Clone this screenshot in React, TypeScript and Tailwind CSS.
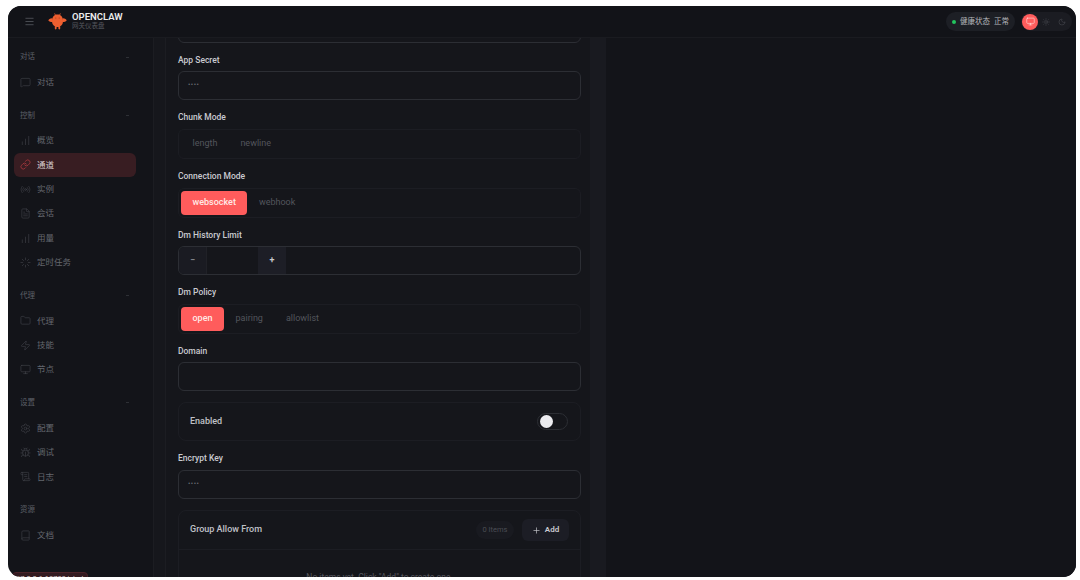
import React from "react";
import {
  Menu, MessageSquare, ChartNoAxesColumnIncreasing, Link, Radio, FileText, Loader, Folder, Zap, Monitor,
  Settings, Bug, ScrollText, Book, Sun, Moon, Plus,
} from "lucide-react";

const FONT = "font-['Roboto','Noto_Sans_CJK_SC',sans-serif]";

type Item = { label: string; icon: React.ElementType; active?: boolean };
type Section = { title: string; dash: boolean; items: Item[] };

const sections: Section[] = [
  { title: "对话", dash: true, items: [{ label: "对话", icon: MessageSquare }] },
  {
    title: "控制",
    dash: true,
    items: [
      { label: "概览", icon: ChartNoAxesColumnIncreasing },
      { label: "通道", icon: Link, active: true },
      { label: "实例", icon: Radio },
      { label: "会话", icon: FileText },
      { label: "用量", icon: ChartNoAxesColumnIncreasing },
      { label: "定时任务", icon: Loader },
    ],
  },
  {
    title: "代理",
    dash: true,
    items: [
      { label: "代理", icon: Folder },
      { label: "技能", icon: Zap },
      { label: "节点", icon: Monitor },
    ],
  },
  {
    title: "设置",
    dash: true,
    items: [
      { label: "配置", icon: Settings },
      { label: "调试", icon: Bug },
      { label: "日志", icon: ScrollText },
    ],
  },
  { title: "资源", dash: false, items: [{ label: "文档", icon: Book }] },
];

function Logo() {
  return (
    <svg width="19" height="17" viewBox="0 0 19 17" className="shrink-0">
      <path d="M9.5 1.4 C13 1.4 15 4 15 8 C15 11.6 12.8 14 9.5 14 C6.2 14 4 11.6 4 8 C4 4 6 1.4 9.5 1.4Z" fill="#ee5f30" />
      <path d="M4.4 5.2 C2.4 5 0.5 6.2 0.3 7.6 C1.6 9.2 3.6 9.2 4.6 8.4Z" fill="#ee5f30" />
      <path d="M14.6 5.2 C16.6 5 18.5 6.2 18.7 7.6 C17.4 9.2 15.4 9.2 14.4 8.4Z" fill="#ee5f30" />
      <rect x="6.8" y="13" width="1.8" height="3.4" rx="0.8" fill="#ee5f30" />
      <rect x="10.4" y="13" width="1.8" height="3.4" rx="0.8" fill="#ee5f30" />
      <path d="M7.4 2 L6.6 0.4 M11.6 2 L12.4 0.4" stroke="#ee5f30" strokeWidth="0.8" />
      <circle cx="7.8" cy="5" r="0.6" fill="#a83a1c" />
      <circle cx="11.2" cy="5" r="0.6" fill="#a83a1c" />
    </svg>
  );
}

function Sidebar() {
  return (
    <aside className="flex w-[145px] shrink-0 flex-col gap-[14px] pl-1.5 pr-[17px] pt-3">
      {sections.map((s) => (
        <div key={s.title} className="flex flex-col">
          <div className="mb-1.5 flex h-[14px] items-center justify-between pl-1.5 pr-[7px] text-[7.5px] text-[#5d6068]">
            <span>{s.title}</span>
            {s.dash && <span className="h-px w-[3px] bg-[#2e3035]" />}
          </div>
          {s.items.map((it) => {
            const Icon = it.icon;
            return (
              <div
                key={it.label}
                className={
                  it.active
                    ? "flex h-[24.4px] items-center gap-[6px] rounded-md bg-[#381d22] pl-[6px] text-[8.5px] text-[#d9cdcf]"
                    : "flex h-[24.4px] items-center gap-[6px] rounded-md pl-[6px] text-[8.5px] text-[#64676e]"
                }
              >
                <Icon size={11} strokeWidth={1.25} className={it.active ? "text-[#d8444c]" : "text-[#45474e]"} />
                <span>{it.label}</span>
              </div>
            );
          })}
        </div>
      ))}
    </aside>
  );
}

function Label({ children }: { children: React.ReactNode }) {
  return <div className="flex h-4 items-center text-[8.5px] font-medium text-[#c9cad0]">{children}</div>;
}

function TextField({ label, placeholder, gap }: { label: string; placeholder?: string; gap?: boolean }) {
  return (
    <div className={gap ? "mb-[9px] flex flex-col gap-1" : "mb-[9px] flex flex-col gap-[3px]"}>
      <Label>{label}</Label>
      <div className="flex h-[29px] items-center rounded-md border border-[#2c2e34] px-[9px] text-[7px] tracking-[0.5px] text-[#6a6c73]">
        {placeholder}
      </div>
    </div>
  );
}

function Segmented({ label, options, active }: { label: string; options: string[]; active?: string }) {
  return (
    <div className="mb-[9.5px] flex flex-col gap-1">
      <Label>{label}</Label>
      <div className="flex h-[29.5px] items-center rounded-md border border-[#1c1d23] px-[2px]">
        {options.map((o) => (
          <div
            key={o}
            className={
              o === active
                ? "flex h-6 items-center rounded bg-[#ff5c5c] px-[11.5px] text-[9px] font-medium text-[#ffe9e6]"
                : "flex h-6 items-center rounded px-[11.5px] text-[9px] text-[#53555c]"
            }
          >
            {o}
          </div>
        ))}
      </div>
    </div>
  );
}

function NumberField({ label }: { label: string }) {
  return (
    <div className="mb-[9px] flex flex-col gap-[3px]">
      <Label>{label}</Label>
      <div className="flex h-[29px] items-stretch overflow-hidden rounded-md border border-[#2c2e34]">
        <div className="flex w-[28px] items-center justify-center border-r border-[#202127] bg-[#1a1b22] text-[9px] font-semibold text-[#8b8d94]">−</div>
        <div className="w-[51px]" />
        <div className="flex w-[28px] items-center justify-center bg-[#1d1e26] text-[9px] font-semibold text-[#c9cad0]">+</div>
      </div>
    </div>
  );
}

function Form() {
  return (
    <div className="-mt-[24px] w-[403px]">
      <div className="mb-[9px] h-[29px] rounded-md border border-[#2c2e34]" />
      <TextField label="App Secret" placeholder="••••" />
      <Segmented label="Chunk Mode" options={["length", "newline"]} />
      <Segmented label="Connection Mode" options={["websocket", "webhook"]} active="websocket" />
      <NumberField label="Dm History Limit" />
      <Segmented label="Dm Policy" options={["open", "pairing", "allowlist"]} active="open" />
      <TextField label="Domain" />
      <div className="mb-[9px] mt-[11px] flex h-[39px] items-center justify-between rounded-lg border border-[#1c1d23] pl-[11px] pr-3 text-[9px] font-medium text-[#c0c1c7]">
        <span>Enabled</span>
        <div className="flex h-[17px] w-[31px] items-center rounded-full border border-[#2c2e34] bg-[#15161b] pl-[2px]">
          <div className="h-[13px] w-[13px] rounded-full bg-[#ececf0]" />
        </div>
      </div>
      <TextField label="Encrypt Key" placeholder="••••" gap />
      <div className="mt-[11px] rounded-lg border border-[#1c1d23]">
        <div className="flex h-[39px] items-center border-b border-[#1c1d23] pl-[11px] pr-[11px]">
          <span className="text-[9px] font-medium text-[#c0c1c7]">Group Allow From</span>
          <span className="ml-auto flex h-[18px] w-[38px] items-center justify-center rounded-full bg-[#191a20] text-[7.5px] text-[#4b4d54]">0 Items</span>
          <span className="ml-2 flex h-[22px] w-[47px] items-center justify-center gap-[4px] rounded-md bg-[#1c1d25] text-[8px] font-semibold text-[#c9cad0]">
            <Plus size={9} strokeWidth={1.75} />
            Add
          </span>
        </div>
        <div className="pt-[21px] text-center text-[8.5px] text-[#55575e]">No items yet. Click "Add" to create one.</div>
      </div>
    </div>
  );
}

export default function App() {
  return (
    <div className={`h-[580px] w-[1080px] overflow-hidden bg-white pb-[3px] pl-2 pr-1 pt-1.5 ${FONT}`}>
      <div className="relative flex h-full flex-col overflow-hidden rounded-[13px] bg-[#131419]">
        <header className="z-10 flex h-8 shrink-0 items-center border-b border-[#1a1b20] bg-[#121318] pl-[16px] pr-[4px]">
          <Menu size={11} strokeWidth={1.25} className="text-[#73757c]" />
          <div className="ml-[13px] flex items-center gap-[5px]">
            <Logo />
            <div className="-mt-px flex flex-col">
              <span className="text-[9.5px] font-semibold leading-[11px] text-[#eceded]">OPENCLAW</span>
              <span className="text-[6.5px] leading-[9px] text-[#54565d]">网关仪表盘</span>
            </div>
          </div>
          <div className="ml-auto flex h-[19px] w-[69px] items-center gap-1 rounded-full bg-[#1d1f25] pl-[6px] text-[7.5px] text-[#b4b5ba]">
            <span className="h-[4px] w-[4px] rounded-full bg-[#22c55e]" />
            <span>健康状态</span>
            <span>正常</span>
          </div>
          <div className="ml-[6px] flex h-[19px] w-[51px] items-center gap-1 rounded-full bg-[#1b1c22] pl-px">
            <span className="flex h-[16px] w-[16px] items-center justify-center rounded-full bg-[#ff5c5c]">
              <Monitor size={9} strokeWidth={1.5} className="text-[#ffe4e0]" />
            </span>
            <Sun size={8} strokeWidth={1.25} className="text-[#5b5d64]" />
            <Moon size={8} strokeWidth={1.25} className="ml-1 text-[#5b5d64]" />
          </div>
        </header>
        <div className="flex min-h-0 flex-1">
          <Sidebar />
          <div className="w-[13px] shrink-0 border-x border-[#1c1d22] bg-[#16171c]" />
          <main className="w-[424px] shrink-0 overflow-hidden bg-[#15161b] pl-3">
            <Form />
          </main>
          <div className="w-[16px] shrink-0 bg-[#191a20]" />
          <div className="flex-1 bg-[#131419]" />
        </div>
        <div className="absolute bottom-[-9px] left-1 z-20 h-[14px] rounded-t border border-[#4a2229] bg-[#331a20] px-[3px] text-[7.5px] leading-[12px] text-[#d8c8ca]">
          27.0.0.1:18789/chat
        </div>
      </div>
    </div>
  );
}
